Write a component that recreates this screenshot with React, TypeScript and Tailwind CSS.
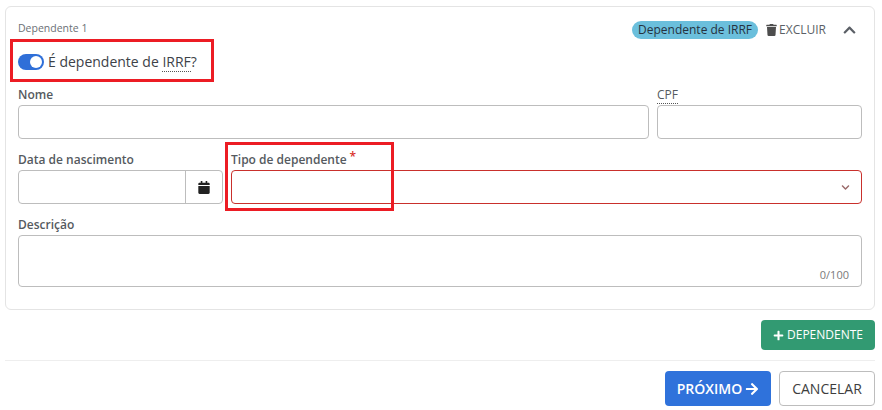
import { FaTrash, FaCalendar, FaPlus, FaArrowRight, FaChevronUp, FaChevronDown } from "react-icons/fa";

const font = "font-['Open_Sans',sans-serif]";

function Label({ children, className = "" }: { children: React.ReactNode; className?: string }) {
  return <div className={`text-[12px] leading-[16px] font-semibold text-[#555a60] ${className}`}>{children}</div>;
}

const inputCls = "border border-[#bdbdbd] rounded-[4px] bg-white";

export default function App() {
  return (
    <div className={`relative w-[882px] h-[410px] bg-white overflow-hidden ${font}`}>
      <div className="pl-[5px] pr-[7px] pt-[6px]">
        <div className="h-[304px] border border-[#e4e4e4] rounded-[6px] pl-[12px] pr-[12px] pt-[14px] flex flex-col">
          <div className="flex items-center h-[18px]">
            <span className="self-start text-[10.5px] leading-[14px] text-[#6b6f75]">Dependente 1</span>
            <div className="ml-auto flex items-center">
              <span className="h-[18px] rounded-full bg-[#6bbfdc] px-[6px] text-[12px] leading-[18px] text-[#26323f]">Dependente de IRRF</span>
              <FaTrash className="ml-[8px] mr-[-1px] w-[11px] h-[12px] text-[#4d4d4d]" />
              <span className="ml-[3px] text-[12px] leading-[16px] text-[#5b5f66]">EXCLUIR</span>
              <FaChevronUp className="ml-[16px] mr-[5px] w-[15px] h-[14px] text-[#5b5f66]" />
            </div>
          </div>
          <div className="flex items-center mt-[13px] h-[20px]">
            <div className="relative w-[26px] h-[16px] rounded-full bg-[#2f6fd8]">
              <div className="absolute right-[2px] top-[2px] w-[12px] h-[12px] rounded-full bg-white" />
            </div>
            <span className="ml-[4px] text-[14px] leading-[20px] text-[#3d4248]">
              É dependente de <span className="border-b border-dotted border-[#555]">IRRF</span>?
            </span>
          </div>
          <div className="flex gap-[8px] mt-[15px]">
            <div className="flex-1">
              <Label className="h-[18px]">Nome</Label>
              <div className={`h-[34px] ${inputCls}`} />
            </div>
            <div className="w-[205px]">
              <Label className="h-[18px]"><span className="font-normal border-b border-dotted border-[#555]">CPF</span></Label>
              <div className={`h-[34px] ${inputCls}`} />
            </div>
          </div>
          <div className="flex gap-[8px] mt-[13px]">
            <div className="w-[205px]">
              <Label className="h-[18px]">Data de nascimento</Label>
              <div className={`h-[34px] flex ${inputCls}`}>
                <div className="flex-1" />
                <div className="w-[37px] border-l border-[#bdbdbd] flex items-center justify-center">
                  <FaCalendar className="w-[12px] h-[13px] text-[#222]" />
                </div>
              </div>
            </div>
            <div className="flex-1">
              <Label className="h-[18px]">
                Tipo de dependente<span className="ml-[3px] text-[#d9302a] relative top-[-3px]">*</span>
              </Label>
              <div className="h-[34px] border border-[#c9302c] rounded-[4px] flex items-center justify-end pr-[11px]">
                <FaChevronDown className="w-[9px] h-[9px] text-[#9a6a6a]" />
              </div>
            </div>
          </div>
          <div className="mt-[13px]">
            <Label className="h-[18px]">Descrição</Label>
            <div className={`h-[52px] flex items-end justify-end pr-[12px] pb-[4px] ${inputCls}`}>
              <span className="text-[11px] leading-[14px] text-[#7a7a7a]">0/100</span>
            </div>
          </div>
        </div>
        <div className="flex justify-end mt-[10px]">
          <button className="w-[114px] h-[30px] rounded-[4px] bg-[#329a72] text-white text-[12px] font-medium flex items-center justify-center gap-[3px]">
            <FaPlus className="w-[11px] h-[11px]" />
            DEPENDENTE
          </button>
        </div>
        <div className="h-px bg-[#eeeeee] mt-[10px]" />
        <div className="flex justify-end gap-[8px] mt-[10px]">
          <button className="w-[106px] h-[35px] rounded-[4px] bg-[#2f72db] text-white text-[14px] font-semibold flex items-center justify-center gap-[3px]">
            PRÓXIMO
            <FaArrowRight className="w-[14px] h-[14px]" />
          </button>
          <button className="w-[96px] h-[35px] rounded-[4px] bg-white border border-[#bdbdbd] text-[#3d3d3d] text-[14px]">
            CANCELAR
          </button>
        </div>
      </div>
      <div className="absolute left-[10px] top-[39px] w-[204px] h-[43px] border-[3px] border-[#ec1c24]" />
      <div className="absolute left-[225px] top-[142px] w-[169px] h-[69px] border-[3px] border-[#ec1c24]" />
    </div>
  );
}
